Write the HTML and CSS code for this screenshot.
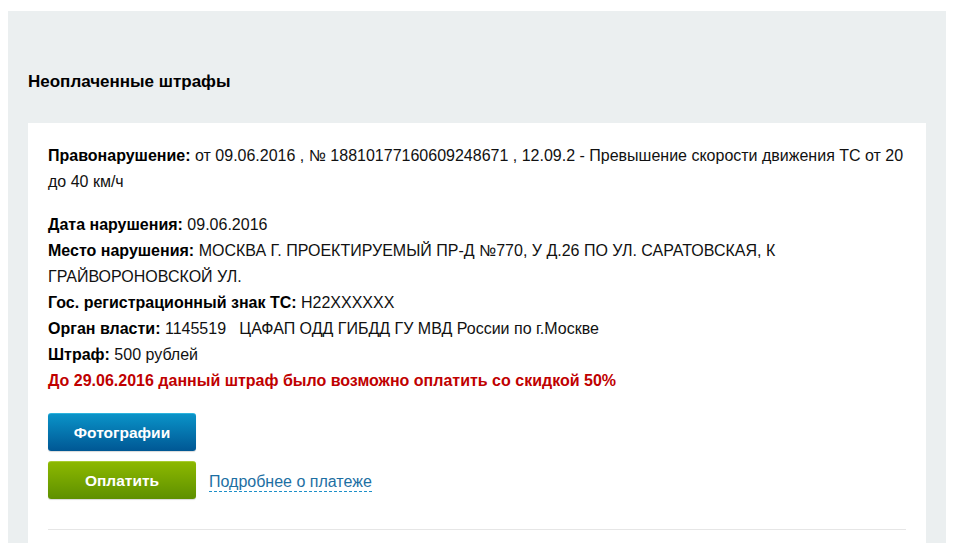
FILE: index.html
```html
<!DOCTYPE html>
<html lang="ru">
<head>
  <meta charset="UTF-8" />
  <meta name="viewport" content="width=device-width, initial-scale=1.0"/>
  <title>Неоплаченные штрафы</title>
  <link rel="stylesheet" href="styles.css">
</head>
<body>

  <div class="panel">
    <h2>Неоплаченные штрафы</h2>

    <div class="card">
      <div class="fine">
        <p class="lead"><b>Правонарушение:</b> от 09.06.2016 , № 18810177160609248671 , 12.09.2 - Превышение скорости движения ТС от 20 до 40 км/ч</p>

        <div class="details">
          <p><b>Дата нарушения:</b> 09.06.2016</p>
          <p><b>Место нарушения:</b> МОСКВА Г. ПРОЕКТИРУЕМЫЙ ПР-Д №770, У Д.26 ПО УЛ. САРАТОВСКАЯ, К ГРАЙВОРОНОВСКОЙ УЛ.</p>
          <p><b>Гос. регистрационный знак ТС:</b> Н22XXXXXX</p>
          <p><b>Орган власти:</b> 1145519&nbsp;&nbsp;&nbsp;ЦАФАП ОДД ГИБДД ГУ МВД России по г.Москве</p>
          <p><b>Штраф:</b> 500 рублей</p>
          <p class="warning">До 29.06.2016 данный штраф было возможно оплатить со скидкой 50%</p>
        </div>

        <div class="actions">
          <button class="btn btn-blue">Фотографии</button>
          <div class="pay-row">
            <button class="btn btn-green">Оплатить</button>
            <a href="#" class="more">Подробнее о платеже</a>
          </div>
        </div>
      </div>
      <hr class="divider">
    </div>
  </div>

</body>
</html>
```

FILE: styles.css
```css
* {
  box-sizing: border-box;
  margin: 0;
  padding: 0;
}
body {
  margin: 11px 7px 0 8px;
  font-family: "Liberation Sans", Arial, sans-serif;
  font-size: 16px;
  color: #111;
  background: #fff;
}
.panel {
  background: #ebeff0;
  padding: 61px 20px 0;
  min-height: 600px;
}
h2 {
  font-size: 17px;
  line-height: 20px;
  font-weight: bold;
  color: #000;
  margin-bottom: 31px;
}
.card {
  background: #fff;
  padding: 20px 20px 0;
  min-height: 500px;
}
.fine p {
  line-height: 26px;
}
.lead {
  margin-bottom: 17px;
}
b {
  color: #000;
}
.warning {
  color: #c00000;
  font-weight: bold;
}
.actions {
  display: flex;
  flex-direction: column;
  gap: 10px;
  margin-top: 19px;
}
.pay-row {
  display: flex;
  align-items: center;
  gap: 13px;
}
.btn {
  width: 148px;
  height: 38px;
  border: none;
  border-radius: 3px;
  color: #fff;
  font-family: "Liberation Sans", Arial, sans-serif;
  font-size: 15.5px;
  font-weight: bold;
  cursor: pointer;
  box-shadow: 0 1px 1px rgba(0, 0, 0, 0.15);
}
.btn-blue {
  background: linear-gradient(to bottom, #0a93c8, #005794);
  border-top: 1px solid #2bb3dd;
}
.btn-green {
  background: linear-gradient(to bottom, #8cb800, #5e9000);
  border-top: 1px solid #a8cc30;
}
.more {
  color: #1d6fa3;
  text-decoration: none;
  border-bottom: 1px dashed #1d8fc8;
  line-height: 18px;
  margin-top: 4px;
}
.divider {
  border: none;
  border-top: 1px solid #e6e6e6;
  margin-top: 30px;
}
```
